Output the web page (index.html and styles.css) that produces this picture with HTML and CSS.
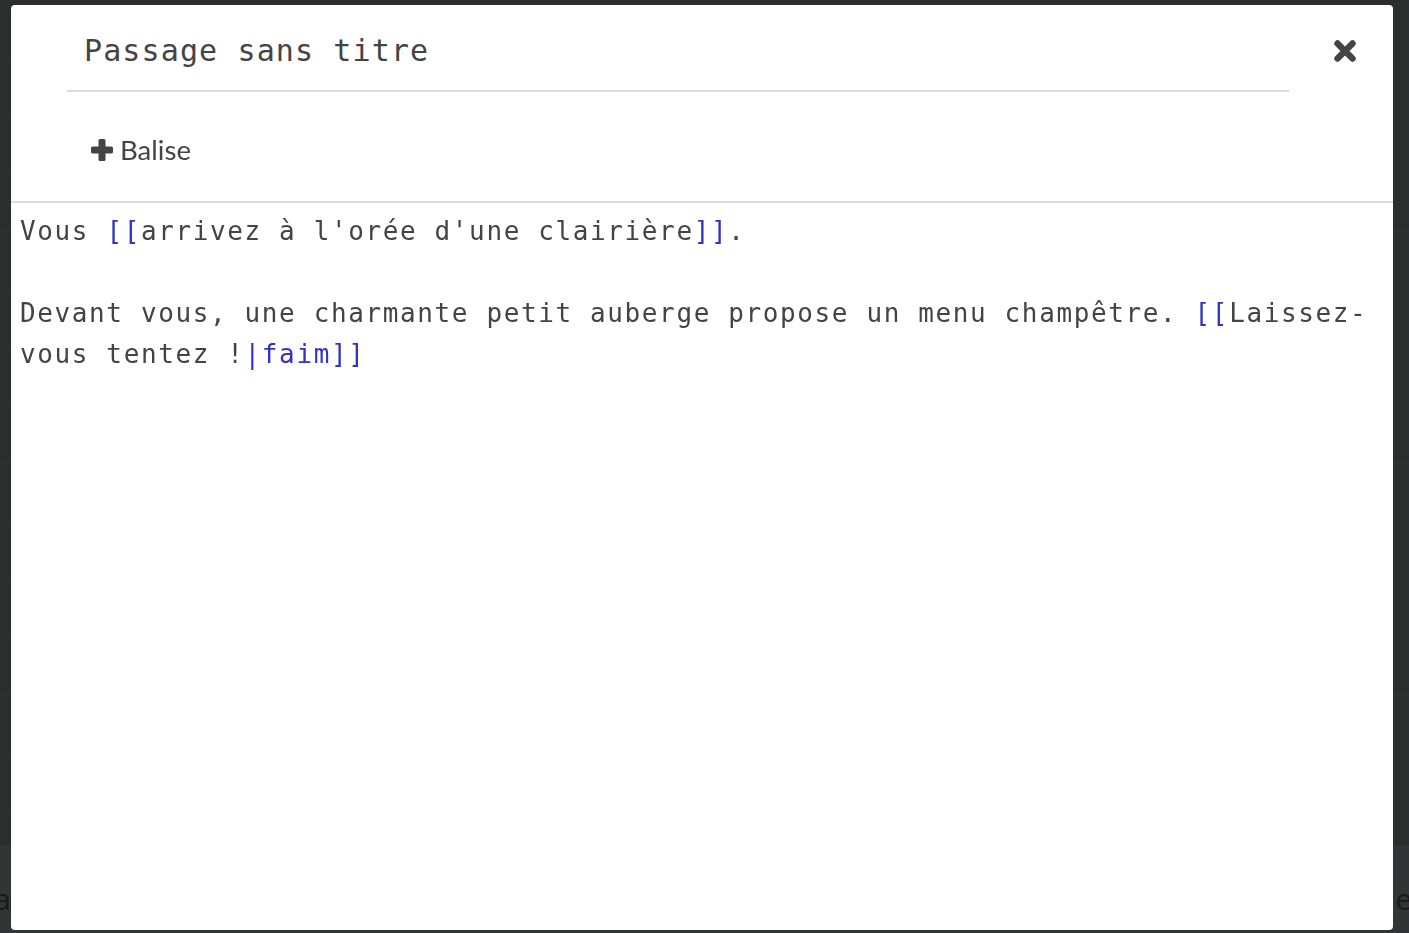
FILE: index.html
```html
<!DOCTYPE html>
<html lang="fr">
<head>
<meta charset="utf-8">
<title>Passage sans titre</title>
<link rel="stylesheet" href="styles.css">
</head>
<body>
<div class="page">
  <div class="page-main"></div>
  <div class="page-foot">
    <span class="foot-left">a</span>
    <span class="foot-right">e</span>
  </div>
</div>

<div class="modal">
  <div class="modal-head">
    <div class="title-wrap">
      <h1 class="title">Passage sans titre</h1>
    </div>
    <button class="close" aria-label="Fermer">
      <svg viewBox="0 0 24 24" width="24" height="24">
        <path d="M4.5 4.5 L19.5 19.5 M19.5 4.5 L4.5 19.5" stroke="#444" stroke-width="6.4" stroke-linecap="round" fill="none"/>
      </svg>
    </button>
  </div>
  <div class="tags">
    <button class="add-tag">
      <svg class="plus" viewBox="0 0 22 22" width="22" height="22">
        <rect x="7.5" y="0" width="7" height="22" rx="1.5" fill="#444"/>
        <rect x="0" y="7.5" width="22" height="7" rx="1.5" fill="#444"/>
      </svg>
      <span>Balise</span>
    </button>
  </div>
  <div class="editor">
    <div class="line">Vous <span class="lk">[[</span>arrivez à l'orée d'une clairière<span class="lk">]]</span>.</div>
    <div class="line">&nbsp;</div>
    <div class="line">Devant vous, une charmante petit auberge propose un menu champêtre. <span class="lk">[[</span>Laissez-vous tentez !<span class="lk">|faim]]</span></div>
  </div>
</div>
</body>
</html>
```

FILE: styles.css
```css
html, body {
  margin: 0;
  padding: 0;
}
body {
  width: 1409px;
  height: 933px;
  overflow: hidden;
  background: #2b2d2f;
  font-family: "DejaVu Sans Mono", monospace;
}
.page {
  display: flex;
  flex-direction: column;
  height: 933px;
}
.page-main {
  height: 845px;
  background-color: #2b2d2f;
  background-image:
    repeating-linear-gradient(to bottom, transparent 0, transparent 57px, #303234 57px, #303234 58px);
}
.page-foot {
  flex: 1;
  background: #333435;
  display: flex;
  justify-content: space-between;
  align-items: center;
  font-family: "Open Sans", sans-serif;
  font-size: 30px;
  color: #1a1a1a;
  padding-top: 18px;
}
.foot-left { margin-left: -6px; }
.foot-right { margin-right: -3px; }

.modal {
  position: fixed;
  left: 11px;
  top: 5px;
  width: 1382px;
  height: 925px;
  background: #fff;
  border-radius: 4px;
  display: flex;
  flex-direction: column;
  box-sizing: border-box;
}
.modal-head {
  display: flex;
  align-items: flex-start;
  padding-left: 56px;
}
.title-wrap {
  width: 1222px;
  height: 87px;
  box-sizing: border-box;
  padding: 6px 0 0 17px;
  border-bottom: 2px solid #dcdcdc;
  display: flex;
  align-items: center;
}
.title {
  margin: 0;
  font-family: "DejaVu Sans Mono", monospace;
  font-weight: normal;
  font-size: 30px;
  letter-spacing: 1.12px;
  color: #444;
}
.close {
  margin: 34px 0 0 44px;
  padding: 0;
  border: 0;
  background: none;
  width: 24px;
  height: 24px;
  display: block;
}
.close svg { display: block; }
.tags {
  height: 111px;
  box-sizing: border-box;
  padding: 6px 0 0 80px;
  display: flex;
  align-items: center;
  border-bottom: 2px solid #dcdcdc;
}
.add-tag {
  border: 0;
  background: none;
  padding: 0;
  display: flex;
  align-items: center;
  gap: 7px;
  font-family: "Lato", "Open Sans", sans-serif;
  font-size: 27.6px;
  color: #444;
}
.plus { display: block; }
.editor {
  padding: 8px 9px;
  font-family: "DejaVu Sans Mono", monospace;
  font-size: 26px;
  letter-spacing: 1.62px;
  line-height: 41px;
  color: #444;
}
.line {
  white-space: pre-wrap;
}
.lk {
  color: #3232c8;
}
```
